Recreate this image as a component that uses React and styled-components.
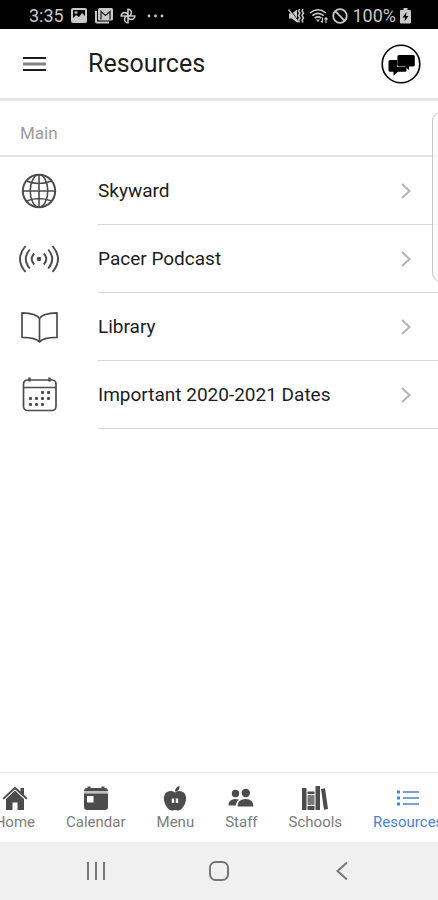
import React from 'react';
import styled, { createGlobalStyle } from 'styled-components';

const colors = {
  text: '#1c1c1c',
  muted: '#9b9b9b',
  line: '#e0e0e0',
  icon: '#4c4c4c',
  tab: '#7c7c7c',
  active: '#4a82d4',
  status: '#c9c9c9',
};

const GlobalStyle = createGlobalStyle`
  * {
    box-sizing: border-box;
  }

  body {
    margin: 0;
    background: #ffffff;
    font-family: Roboto, "Liberation Sans", sans-serif;
    color: ${colors.text};
  }
`;

const Screen = styled.div`
  display: flex;
  flex-direction: column;
  min-height: 100vh;
  overflow: hidden;
  background: #ffffff;
`;

const StatusBar = styled.div`
  display: flex;
  align-items: center;
  justify-content: space-between;
  height: 29px;
  padding: 2px 27px 0 29px;
  background: #000000;
  color: ${colors.status};
  font-size: 18px;
  line-height: 20px;
`;

const StatusGroup = styled.div`
  display: flex;
  align-items: center;
  gap: ${({ $gap }) => $gap}px;

  svg {
    display: block;
  }
`;

const Header = styled.header`
  display: flex;
  align-items: center;
  height: 72px;
  padding: 0 17px 0 21px;
  border-bottom: 3px solid #e4e4e4;
`;

const IconButton = styled.button`
  display: flex;
  align-items: center;
  justify-content: center;
  padding: 0;
  border: 0;
  background: none;
  color: inherit;
  cursor: pointer;
`;

const Title = styled.h1`
  flex: 1;
  margin: 0 0 0 40px;
  font-size: 25px;
  font-weight: 400;
  line-height: 28px;
`;

const Content = styled.main`
  position: relative;
  flex: 1;
`;

const SectionTitle = styled.h2`
  margin: 0;
  padding: 22px 20px 12px;
  border-bottom: 2px solid ${colors.line};
  color: ${colors.muted};
  font-size: 17px;
  font-weight: 400;
  line-height: 20px;
`;

const List = styled.ul`
  margin: 0;
  padding: 0;
  list-style: none;
`;

const Row = styled.a`
  display: flex;
  gap: 39px;
  height: 68px;
  padding-left: 19px;
  color: inherit;
  text-decoration: none;
`;

const RowIcon = styled.span`
  display: flex;
  align-items: center;
  color: ${colors.icon};
`;

const RowBody = styled.span`
  display: flex;
  flex: 1;
  align-items: center;
  justify-content: space-between;
  padding-right: 26px;
  border-bottom: 1px solid #d8d8d8;
  font-size: 19px;
  line-height: 24px;
`;

const EdgeHandle = styled.div`
  position: absolute;
  top: 11px;
  right: -12px;
  width: 18px;
  height: 170px;
  border: 1px solid #c6c6c6;
  border-radius: 9px;
  background: rgba(255, 255, 255, 0.7);
`;

const TabBar = styled.nav`
  display: flex;
  justify-content: center;
  gap: 31px;
  height: 70px;
  padding-top: 12px;
  border-top: 1px solid #e9e9e9;
`;

const Tab = styled.a`
  display: flex;
  flex-direction: column;
  flex-shrink: 0;
  align-items: center;
  gap: 3px;
  color: ${({ $active }) => ($active ? colors.active : colors.tab)};
  font-size: 15px;
  line-height: 16px;
  text-decoration: none;

  svg {
    color: ${({ $active }) => ($active ? colors.active : colors.icon)};
  }
`;

const SystemNav = styled.div`
  display: flex;
  height: 58px;
  padding: 0 35px;
  background: #f0f0f0;
  color: #777777;

  button {
    flex: 1;
  }
`;

const Icon = ({ width, height, children, ...rest }) => (
  <svg
    width={width}
    height={height}
    viewBox={`0 0 ${width} ${height}`}
    fill="none"
    stroke="currentColor"
    aria-hidden="true"
    {...rest}
  >
    {children}
  </svg>
);

const PictureIcon = () => (
  <Icon width={16} height={15} stroke="none" fill="currentColor">
    <path
      fillRule="evenodd"
      d="M2 0h12a2 2 0 0 1 2 2v11a2 2 0 0 1-2 2H2a2 2 0 0 1-2-2V2a2 2 0 0 1 2-2ZM2 2v8l3-3 3 2 3-4 3 3V2ZM3.5 3.5h3v2h-3Z"
    />
  </Icon>
);

const MailStackIcon = () => (
  <Icon width={19} height={16}>
    <path d="M2 3v10.5q0 1 1 1h12" strokeWidth="2" />
    <rect x="4" y="0" width="15" height="12.5" rx="1.5" fill="currentColor" stroke="none" />
    <path d="M7 11.500v-8l4.500 4 4.500-4v8" stroke="#222" strokeWidth="1.300" />
  </Icon>
);

const PinwheelIcon = () => (
  <Icon width={16} height={16} strokeWidth="1.6">
    <path d="M8 8V1.200a3.300 3.300 0 0 1 0 6.800M8 8h6.800a3.300 3.300 0 0 1-6.800 0M8 8v6.800a3.300 3.300 0 0 1 0-6.800M8 8H1.200a3.300 3.300 0 0 1 6.800 0" />
  </Icon>
);

const DotsIcon = () => (
  <Icon width={17} height={4} stroke="none" fill="currentColor">
    <circle cx="2" cy="2" r="1.4" />
    <circle cx="8.5" cy="2" r="1.4" />
    <circle cx="15" cy="2" r="1.4" />
  </Icon>
);

const MuteIcon = () => (
  <Icon width={17} height={16}>
    <path d="M1 5.500h3L9 1.500v13L4 10.500H1Z" fill="currentColor" stroke="none" />
    <path d="m1.500 1 9 12" stroke="#000" strokeWidth="1" />
    <path d="m0.500 1.500 9.500 12.500" strokeWidth="1.400" />
    <path d="m11.500 1-1 2 1.500 2-1.500 2.500 1.500 2.500-1.500 2 1 2.500M15 1l-1 2 1.500 2L14 7.500l1.500 2.500-1.500 2 1 2.500" strokeWidth="1.500" />
  </Icon>
);

const WifiIcon = () => (
  <Icon width={19} height={16} strokeWidth="1.6">
    <path d="M1 5q8-6.500 16 0M3.300 7.600q5.700-4.600 11.400 0M5.700 10.200q3.300-2.600 6.600 0" />
    <path d="m7 11.500 2 2.500 2-2.500Z" fill="currentColor" stroke="none" />
    <path d="M13.500 9.500v5m-1.500-1.500 1.500 1.700M17 15v-5m-1.500 1.500L17 9.800l1.500 1.700" strokeWidth="1.200" />
  </Icon>
);

const BlockedIcon = () => (
  <Icon width={16} height={16} strokeWidth="1.8">
    <circle cx="8" cy="8" r="6.8" />
    <path d="m3.200 3.200 9.600 9.600" />
  </Icon>
);

const BatteryIcon = () => (
  <Icon width={11} height={16} stroke="none" fill="currentColor">
    <path
      fillRule="evenodd"
      d="M3.500 0h4v2H10a1 1 0 0 1 1 1v11.500a1 1 0 0 1-1 1H1a1 1 0 0 1-1-1V3a1 1 0 0 1 1-1h2.500ZM6.500 4 2.500 9.500H5L4.500 13.500l4-5.500H6Z"
    />
  </Icon>
);

const MenuIcon = () => (
  <Icon width={27} height={16} strokeWidth="2">
    <path d="M2 2h23M2 14h23" />
    <path d="M2 8h23" strokeWidth="3" opacity="0.55" />
  </Icon>
);

const ChatIcon = () => (
  <Icon width={40} height={40} stroke="#000">
    <circle cx="20" cy="20" r="18.800" strokeWidth="1.600" />
    <path
      d="M9 16h7.200v7h9.300v3.500q0 1.200-1.200 1.200H17l-4.500 4v-4H9q-1.500 0-1.500-1.500V17.500Q7.500 16 9 16Z"
      fill="#000"
      stroke="none"
    />
    <path
      d="M18 11h14.200q1.600 0 1.600 1.600v8.400q0 1.600-1.600 1.600H28v3.400l-4-3.400h-6q-1.600 0-1.600-1.600v-8.400Q16.400 11 18 11Z"
      fill="#000"
      stroke="none"
    />
  </Icon>
);

const GlobeIcon = () => (
  <Icon width={40} height={40} strokeWidth="1.600">
    <circle cx="20" cy="20" r="16.200" strokeWidth="2" />
    <ellipse cx="20" cy="20" rx="8.800" ry="16.200" />
    <path d="M20 4v32M4 20h32M7.500 10q12.500 5 25 0M7.500 30q12.500-5 25 0" />
  </Icon>
);

const BroadcastIcon = () => (
  <Icon width={40} height={40} strokeWidth="1.900">
    <circle cx="20" cy="20" r="2.300" fill="currentColor" stroke="none" />
    <path d="M15.200 14.500q-5 5.500 0 11M10.800 10.500q-8 9.500 0 19M6.500 7q-11 13 0 26" />
    <path d="M24.800 14.500q5 5.500 0 11M29.200 10.500q8 9.500 0 19M33.500 7q11 13 0 26" />
  </Icon>
);

const BookIcon = () => (
  <Icon width={40} height={40} strokeWidth="1.700" strokeLinejoin="round">
    <path d="M20.500 11.500Q17.500 6 3 5.800v24.500q14.500 .2 17.500 4.700 3-4.500 17.500-4.700V5.800Q23.500 6 20.500 11.500ZM20.500 11.500V35" />
  </Icon>
);

const DatesIcon = () => {
  const dots = [
    [23.5, 17.5], [29.5, 17.5],
    [11.5, 23.5], [17.5, 23.5], [23.5, 23.5], [29.5, 23.5],
    [11.5, 29.5], [17.5, 29.5], [23.5, 29.5],
  ];

  return (
    <Icon width={40} height={40} strokeWidth="1.700">
      <rect x="4.500" y="5" width="32.500" height="30.500" rx="4" />
      <path d="M4.500 12.500h32.500" />
      <path d="M10.500 2.500v4M30.500 2.500v4" strokeWidth="2.400" />
      {dots.map(([x, y]) => (
        <rect
          key={`${x}-${y}`}
          x={x - 1.5}
          y={y - 1.5}
          width="3"
          height="3"
          rx="1"
          fill="currentColor"
          stroke="none"
        />
      ))}
    </Icon>
  );
};

const ChevronIcon = () => (
  <Icon width={12} height={18} stroke="#b4b4b4" strokeWidth="2">
    <path d="m2 2 7.500 7L2 16" />
  </Icon>
);

const HomeIcon = () => (
  <Icon width={26} height={26} stroke="none" fill="currentColor">
    <path d="M13 1.500 18.500 6.500V3H22v6.800l3.500 3.400-1.300 1.400L13 4.200 1.800 14.600.5 13.200Z" />
    <path d="M13 5.500 22 14V25h-6.500v-7.500h-5V25H4V14Z" />
  </Icon>
);

const CalendarIcon = () => (
  <Icon width={26} height={26} stroke="none" fill="currentColor">
    <path d="M1 6q0-3 3-3h.5V1.500h3V3h11V1.500h3V3h.5q3 0 3 3Z" />
    <path
      fillRule="evenodd"
      d="M1 8.500h24V22q0 3-3 3H4q-3 0-3-3ZM4 11v6.500h6.500V11Z"
    />
    <path d="M1 6h24v2.500H1Z" opacity="0.35" />
  </Icon>
);

const AppleIcon = () => (
  <Icon width={26} height={26} stroke="none" fill="currentColor">
    <path d="M13 6.500Q13 2 17.500 1q.5 3.800-3 5.500Z" />
    <path
      fillRule="evenodd"
      d="M13 7.500Q17 5 20.500 6.800C24 8.600 24.800 13 23.500 17c-1.300 4.500-4.500 8.700-7.500 8.500-1.300-.1-2-.5-3-.5s-1.700.4-3 .5c-3 .2-6.200-4-7.500-8.500C1.200 13 2 8.600 5.500 6.800Q9 5 13 7.500ZM9.800 13.500v4.500h2.400v-4.500ZM13.800 13.500v4.500h2.400v-4.500Z"
    />
  </Icon>
);

const StaffIcon = () => (
  <Icon width={26} height={26} stroke="none" fill="currentColor">
    <circle cx="7.500" cy="8.500" r="3.700" />
    <circle cx="17.800" cy="8" r="4.200" />
    <path d="M.5 20.500Q.5 14 7.500 14q2 0 3.500.8-3 2-3 5.700Z" />
    <path d="M9.500 21.500Q9.500 14 17.500 14t8 7.500Z" />
  </Icon>
);

const BooksIcon = () => (
  <Icon width={26} height={26} stroke="none" fill="currentColor">
    <path d="M0 3h4.500v22H0ZM13.500 1H18v24h-4.500ZM19 4l4-.8L26 24l-4 .8Z" />
    <path d="M5.500 6.500h7V9h-7ZM5.500 21h7v4h-7Z" />
    <path d="M5.500 10h7v10h-7Z" opacity="0.75" />
  </Icon>
);

const ResourcesIcon = () => (
  <Icon width={26} height={26} strokeWidth="1.600">
    <path d="M8 7h16M8 13h16M8 19h16" />
    <path d="M2 7h3M2 13h3M2 19h3" strokeWidth="3" />
  </Icon>
);

const RecentsIcon = () => (
  <Icon width={20} height={20} strokeWidth="2">
    <path d="M2 1v18M10 1v18M18 1v18" />
  </Icon>
);

const HomeKeyIcon = () => (
  <Icon width={22} height={22} strokeWidth="2">
    <rect x="2" y="2" width="18" height="18" rx="5.500" />
  </Icon>
);

const BackIcon = () => (
  <Icon width={14} height={20} strokeWidth="2">
    <path d="M12 1.500 2.500 10l9.500 8.500" />
  </Icon>
);

const resources = [
  { label: 'Skyward', icon: GlobeIcon },
  { label: 'Pacer Podcast', icon: BroadcastIcon },
  { label: 'Library', icon: BookIcon },
  { label: 'Important 2020-2021 Dates', icon: DatesIcon },
];

const tabs = [
  { label: 'Home', icon: HomeIcon },
  { label: 'Calendar', icon: CalendarIcon },
  { label: 'Menu', icon: AppleIcon },
  { label: 'Staff', icon: StaffIcon },
  { label: 'Schools', icon: BooksIcon },
  { label: 'Resources', icon: ResourcesIcon, active: true },
];

const App = () => (
  <>
    <GlobalStyle />
    <Screen>
      <StatusBar>
        <StatusGroup $gap={11}>
          <StatusGroup $gap={7}>
            <span>3:35</span>
            <PictureIcon />
            <MailStackIcon />
            <PinwheelIcon />
          </StatusGroup>
          <DotsIcon />
        </StatusGroup>
        <StatusGroup $gap={4}>
          <MuteIcon />
          <WifiIcon />
          <BlockedIcon />
          <span>100%</span>
          <BatteryIcon />
        </StatusGroup>
      </StatusBar>

      <Header>
        <IconButton type="button" aria-label="Menu">
          <MenuIcon />
        </IconButton>
        <Title>Resources</Title>
        <IconButton type="button" aria-label="Messages">
          <ChatIcon />
        </IconButton>
      </Header>

      <Content>
        <SectionTitle>Main</SectionTitle>
        <List>
          {resources.map(({ label, icon: ItemIcon }) => (
            <li key={label}>
              <Row href="#">
                <RowIcon>
                  <ItemIcon />
                </RowIcon>
                <RowBody>
                  {label}
                  <ChevronIcon />
                </RowBody>
              </Row>
            </li>
          ))}
        </List>
        <EdgeHandle />
      </Content>

      <TabBar>
        {tabs.map(({ label, icon: TabIcon, active }) => (
          <Tab key={label} href="#" $active={active}>
            <TabIcon />
            {label}
          </Tab>
        ))}
      </TabBar>

      <SystemNav>
        <IconButton type="button" aria-label="Recent apps">
          <RecentsIcon />
        </IconButton>
        <IconButton type="button" aria-label="Home screen">
          <HomeKeyIcon />
        </IconButton>
        <IconButton type="button" aria-label="Back">
          <BackIcon />
        </IconButton>
      </SystemNav>
    </Screen>
  </>
);

export default App;
